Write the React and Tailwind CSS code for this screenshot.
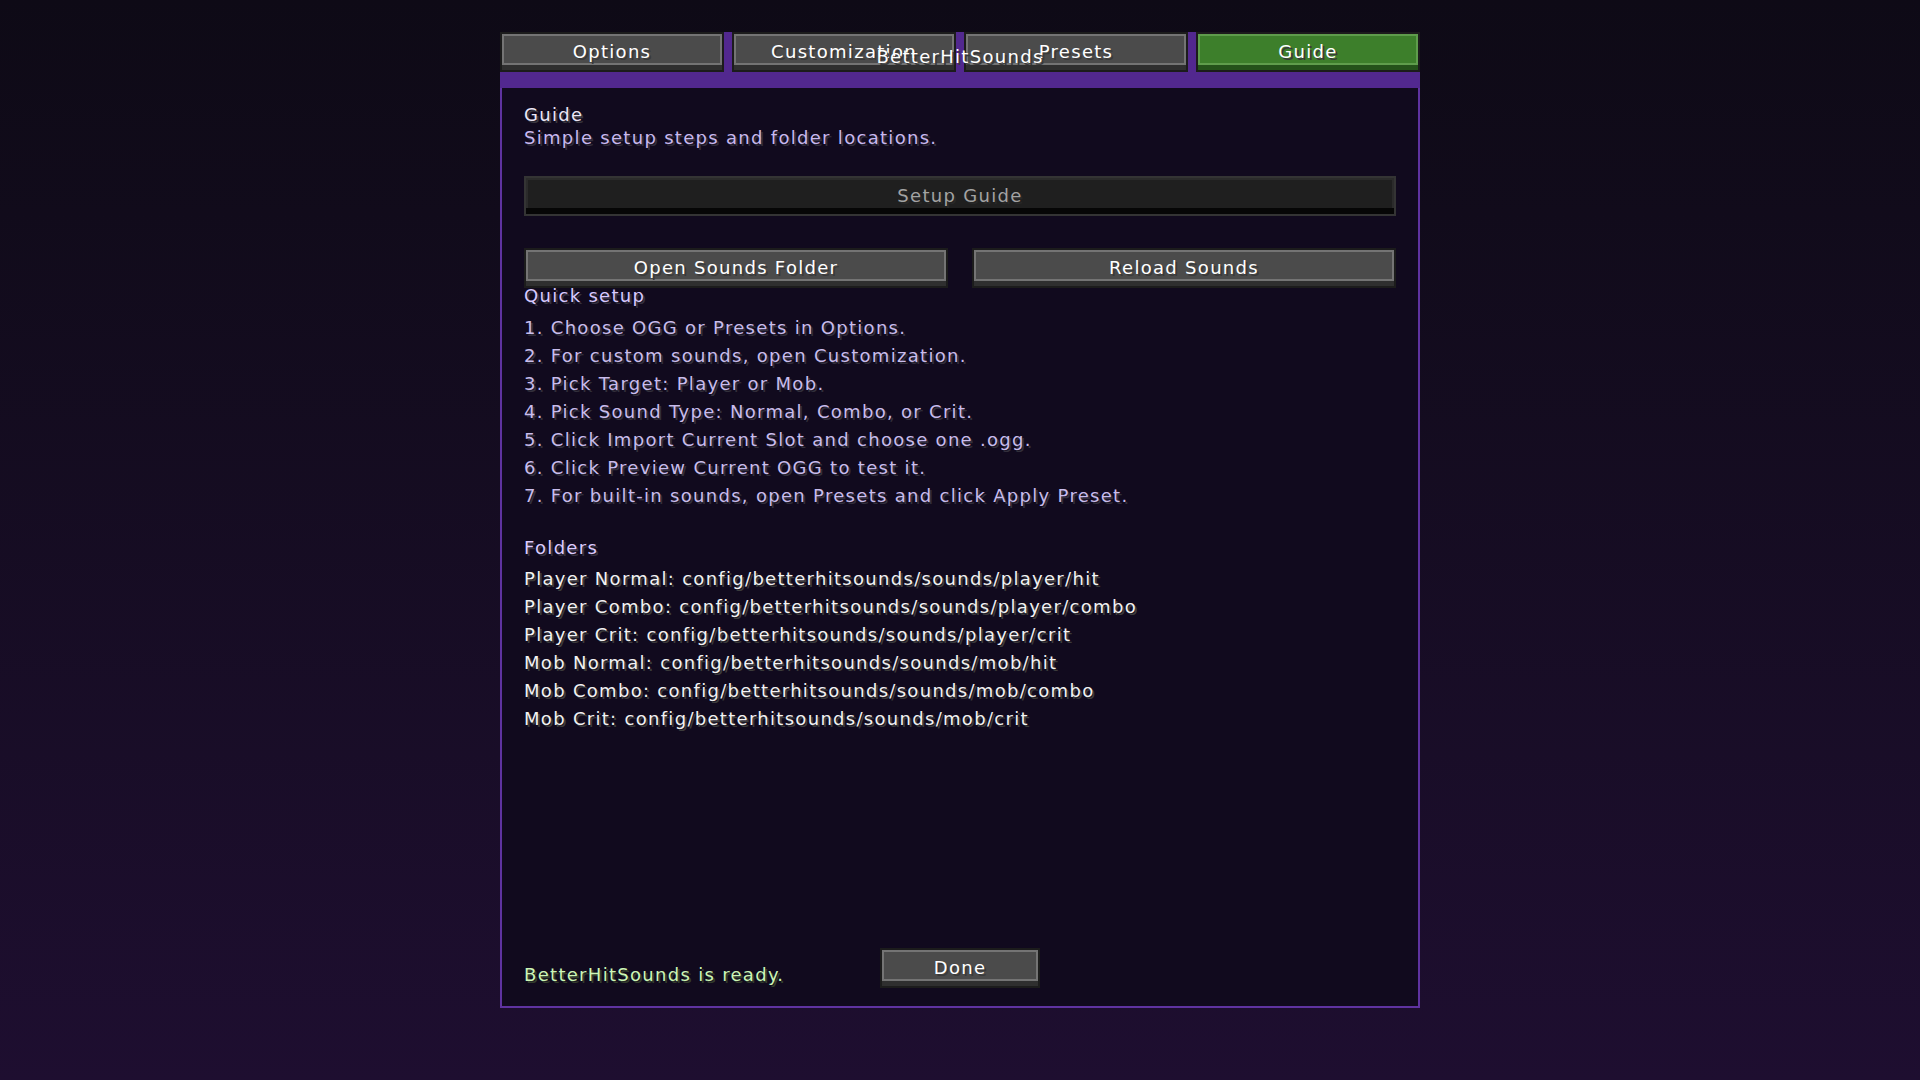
const tabs = ['Options', 'Customization', 'Presets', 'Guide']

const steps = [
  '1. Choose OGG or Presets in Options.',
  '2. For custom sounds, open Customization.',
  '3. Pick Target: Player or Mob.',
  '4. Pick Sound Type: Normal, Combo, or Crit.',
  '5. Click Import Current Slot and choose one .ogg.',
  '6. Click Preview Current OGG to test it.',
  '7. For built-in sounds, open Presets and click Apply Preset.',
]

const folders = [
  'Player Normal: config/betterhitsounds/sounds/player/hit',
  'Player Combo: config/betterhitsounds/sounds/player/combo',
  'Player Crit: config/betterhitsounds/sounds/player/crit',
  'Mob Normal: config/betterhitsounds/sounds/mob/hit',
  'Mob Combo: config/betterhitsounds/sounds/mob/combo',
  'Mob Crit: config/betterhitsounds/sounds/mob/crit',
]

// blocky bevelled button, gray by default and green when selected
const McButton = ({ label, active = false, className = '' }) => {
  const face = active
    ? 'bg-[#3d7f2b] border-[#5f9d4c]'
    : 'bg-[#4b4b4b] border-[#747474]'
  const base = active ? 'bg-[#24521a]' : 'bg-[#2f2f2f]'
  return (
    <div className={`h-[40px] bg-[#1c1c1c] p-[2px] ${className}`}>
      <div className={`flex h-full flex-col ${base}`}>
        <div className={`flex h-[31px] items-center justify-center border-2 ${face}`}>
          <span className="pt-[3px] text-white [text-shadow:2px_2px_0_#3a3a3a]">{label}</span>
        </div>
      </div>
    </div>
  )
}

const DisabledBar = ({ label }) => (
  <div className="h-[40px] bg-[#343434] p-[2px]">
    <div className="flex h-full flex-col bg-[#060606]">
      <div className="flex h-[30px] items-center justify-center border-l-2 border-t-2 border-r-2 border-[#2b2b2b] bg-[#1f1f1f]">
        <span className="pt-[2px] text-[#a3a3a3] [text-shadow:2px_2px_0_#282828]">{label}</span>
      </div>
    </div>
  </div>
)

export default function App() {
  return (
    <div className="flex min-h-screen w-full justify-center bg-linear-to-b from-[#0e0a16] to-[#1e0e30] font-['DejaVu_Sans',sans-serif] text-[18px] tracking-[1.3px]">
      <div className="mt-[32px] flex h-[976px] w-[920px] flex-col">
        {/* tab strip on the purple header */}
        <div className="relative h-[56px] bg-[#52288f]">
          <div className="grid grid-cols-4 gap-2">
            {tabs.map(t => (
              <McButton key={t} label={t} active={t === 'Guide'} />
            ))}
          </div>
          <div className="absolute left-0 right-0 top-[15px] text-center leading-[20px] text-white [text-shadow:2px_2px_0_#3a3a3a]">
            BetterHitSounds
          </div>
        </div>

        <div className="flex flex-1 flex-col border-x-2 border-b-2 border-[#5f33a0] bg-[#110a1e] px-[22px] pb-[18px] pt-[17px]">
          <div className="leading-[20px] text-[#ece6f6] [text-shadow:2px_2px_0_#3a3840]">Guide</div>
          <div className="mt-[3px] leading-[20px] text-[#c9b9ef] [text-shadow:2px_2px_0_#322e3c]">
            Simple setup steps and folder locations.
          </div>

          <div className="mt-[28px]">
            <DisabledBar label="Setup Guide" />
          </div>

          <div className="mt-[32px] grid grid-cols-2 gap-6">
            <McButton label="Open Sounds Folder" />
            <McButton label="Reload Sounds" />
          </div>

          <div className="-mt-[2px] leading-[20px] text-[#d8c9ff] [text-shadow:2px_2px_0_#363240]">Quick setup</div>
          <ul className="mt-[8px]">
            {steps.map(s => (
              <li key={s} className="leading-[28px] text-[#c9bdec] [text-shadow:2px_2px_0_#322f3b]">{s}</li>
            ))}
          </ul>

          <div className="mt-[28px] leading-[20px] text-[#ddccff] [text-shadow:2px_2px_0_#373340]">Folders</div>
          <ul className="mt-[7px]">
            {folders.map(f => (
              <li key={f} className="leading-[28px] text-[#f2f2f2] [text-shadow:2px_2px_0_#3c3c3c]">{f}</li>
            ))}
          </ul>

          <div className="mt-auto grid grid-cols-[1fr_160px_1fr] items-start">
            <div className="mt-[17px] leading-[20px] text-[#cdf6b6] [text-shadow:2px_2px_0_#333d2d]">
              BetterHitSounds is ready.
            </div>
            <McButton label="Done" />
            <div />
          </div>
        </div>
      </div>
    </div>
  )
}
